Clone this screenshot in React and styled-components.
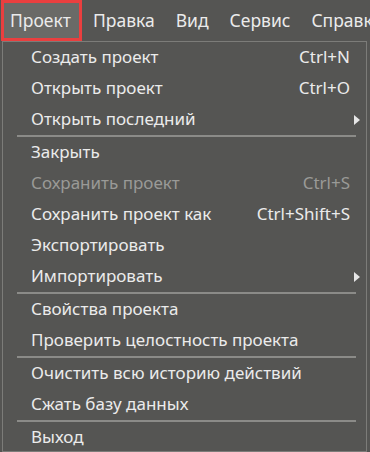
import React from 'react';
import styled, { createGlobalStyle } from 'styled-components';

const GlobalStyle = createGlobalStyle`
  html, body {
    margin: 0;
    padding: 0;
    background-color: #555553;
    overflow: hidden;
  }

  body {
    font-family: 'Noto Sans', 'Open Sans', sans-serif;
    font-size: 17px;
    color: #ebebeb;
  }
`;

const Screen = styled.div`
  width: 370px;
  height: 452px;
  display: flex;
  flex-direction: column;
  background-color: #555553;
  overflow: hidden;
`;

const MenuBar = styled.div`
  display: flex;
  align-items: stretch;
  height: 41px;
  font-size: 17.5px;
  overflow: hidden;
`;

const BarItem = styled.div`
  display: flex;
  align-items: center;
  box-sizing: border-box;
  padding: 0 7px 2px 14px;
  white-space: nowrap;
  flex-shrink: 0;
  border: 3px solid transparent;
  margin-left: ${(p) => (p.$first ? '1px' : '-6px')};
  padding-left: ${(p) => (p.$first ? '6px' : '14px')};
  padding-right: ${(p) => (p.$first ? '8px' : '7px')};
  background-color: ${(p) => (p.$active ? '#6a6a67' : 'transparent')};
  border-color: ${(p) => (p.$active ? '#ea3f3f' : 'transparent')};
`;

const Dropdown = styled.div`
  display: flex;
  flex-direction: column;
  box-sizing: border-box;
  margin-left: 2px;
  width: 365px;
  height: 411px;
  border: 1px solid #7c7c79;
  overflow: hidden;
`;

const Row = styled.div`
  display: flex;
  align-items: center;
  flex-shrink: 0;
  height: 31px;
  padding-left: 28px;
  color: ${(p) => (p.$disabled ? '#9a9a97' : '#ebebeb')};
  white-space: nowrap;
`;

const Label = styled.span`
  flex: 1;
  padding-bottom: 2px;
`;

const Shortcut = styled.span`
  padding-bottom: 2px;
`;

const ArrowSlot = styled.span`
  display: flex;
  align-items: center;
  width: 16px;
  padding-left: 4px;
  box-sizing: border-box;
`;

const Separator = styled.div`
  flex-shrink: 0;
  height: 2px;
  margin: 0 10px 0 14px;
  background-color: #8b8b88;
`;

const Arrow = () => (
  <svg width="6" height="10" viewBox="0 0 6 10">
    <polygon points="0,0 6,5 0,10" fill="#e6e6e6" />
  </svg>
);

const barItems = ['Проект', 'Правка', 'Вид', 'Сервис', 'Справка'];

const groups = [
  [
    { label: 'Создать проект', shortcut: 'Ctrl+N' },
    { label: 'Открыть проект', shortcut: 'Ctrl+O' },
    { label: 'Открыть последний', submenu: true },
  ],
  [
    { label: 'Закрыть' },
    { label: 'Сохранить проект', shortcut: 'Ctrl+S', disabled: true },
    { label: 'Сохранить проект как', shortcut: 'Ctrl+Shift+S' },
    { label: 'Экспортировать' },
    { label: 'Импортировать', submenu: true },
  ],
  [{ label: 'Свойства проекта' }, { label: 'Проверить целостность проекта' }],
  [{ label: 'Очистить всю историю действий' }, { label: 'Сжать базу данных' }],
  [{ label: 'Выход' }],
];

function App() {
  return (
    <>
      <GlobalStyle />
      <Screen>
        <MenuBar>
          {barItems.map((name, i) => (
            <BarItem key={name} $first={i === 0} $active={i === 0}>
              {name}
            </BarItem>
          ))}
        </MenuBar>

        <Dropdown>
          {groups.map((group, gi) => (
            <React.Fragment key={gi}>
              {gi > 0 && <Separator />}
              {group.map((item) => (
                <Row key={item.label} $disabled={item.disabled}>
                  <Label>{item.label}</Label>
                  {item.shortcut && <Shortcut>{item.shortcut}</Shortcut>}
                  <ArrowSlot>{item.submenu && <Arrow />}</ArrowSlot>
                </Row>
              ))}
            </React.Fragment>
          ))}
        </Dropdown>
      </Screen>
    </>
  );
}

export default App;
